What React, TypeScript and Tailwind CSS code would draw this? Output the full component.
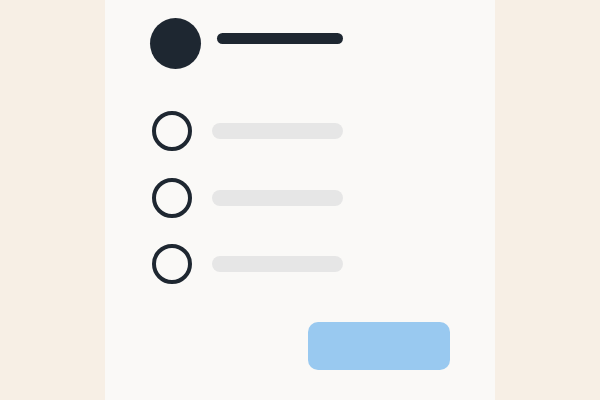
export default function App() {
  const rows = [0, 1, 2];
  return (
    <div className="w-[600px] h-[400px] bg-[#f7efe5] overflow-hidden">
      <div className="w-[390px] h-[400px] mx-auto bg-[#faf9f7] flex flex-col pt-[18px]">
        {/* header: avatar + title line */}
        <div className="flex items-start pl-[45px]">
          <div className="w-[51px] h-[51px] rounded-full bg-[#1e2731]" />
          <div className="ml-[16px] mt-[15px] w-[126px] h-[11px] rounded-full bg-[#1e2731]" />
        </div>
        {/* radio options */}
        <div className="flex flex-col gap-[26.5px] mt-[42px] pl-[47px]">
          {rows.map((i) => (
            <div key={i} className="flex items-center">
              <div className="w-[40px] h-[40px] rounded-full border-[4.5px] border-[#1e2731]" />
              <div className="ml-[20px] w-[131px] h-[16px] rounded-full bg-[#e6e6e6]" />
            </div>
          ))}
        </div>
        {/* submit button */}
        <div className="flex justify-end pr-[45px] mt-[38px]">
          <div className="w-[142px] h-[48px] rounded-[10px] bg-[#99c9f0]" />
        </div>
      </div>
    </div>
  );
}
